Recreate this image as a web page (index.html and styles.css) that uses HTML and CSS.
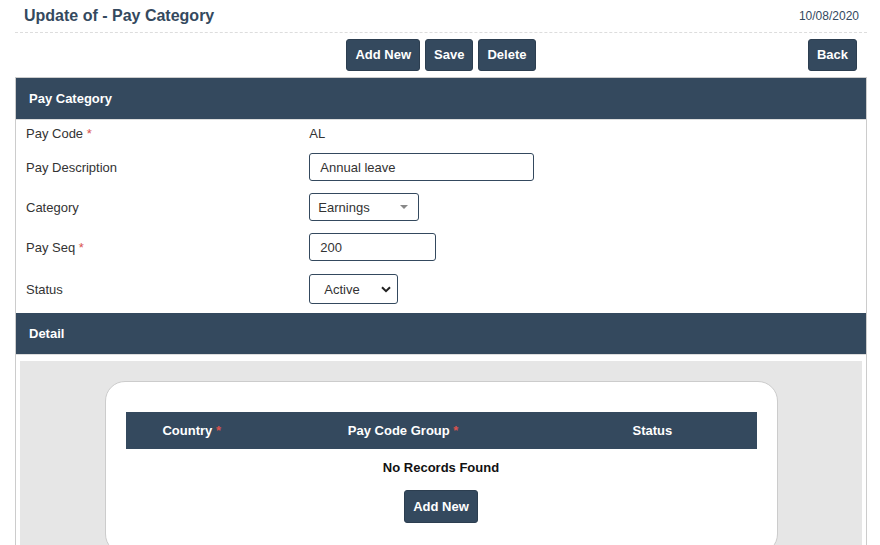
FILE: index.html
```html
<!DOCTYPE html>
<html lang="en">
<head>
	<meta charset="UTF-8">
	<title>Pay Category</title>
	<link rel="stylesheet" href="styles.css">
</head>
<body>
	<div class="page">
		<div class="page-hd">
			<h1 class="page-title">Update of - Pay Category</h1>
			<span class="page-date">10/08/2020</span>
		</div>
		<div class="toolbar">
			<div class="btn-group">
				<a href="#" class="btn">Add New</a>
				<a href="#" class="btn">Save</a>
				<a href="#" class="btn">Delete</a>
			</div>
			<a href="#" class="btn btn-back">Back</a>
		</div>
		<div class="panel">
			<div class="panel-hd">Pay Category</div>
			<div class="form-row row-text">
				<label class="form-label">Pay Code <span class="req">*</span></label>
				<div class="form-value">AL</div>
			</div>
			<div class="form-row">
				<label class="form-label">Pay Description</label>
				<div class="form-value"><input type="text" class="field field-desc" value="Annual leave"></div>
			</div>
			<div class="form-row">
				<label class="form-label">Category</label>
				<div class="form-value">
					<div class="dropdown">
						<span>Earnings</span>
						<span class="caret"></span>
					</div>
				</div>
			</div>
			<div class="form-row">
				<label class="form-label">Pay Seq <span class="req">*</span></label>
				<div class="form-value"><input type="text" class="field field-seq" value="200"></div>
			</div>
			<div class="form-row row-last">
				<label class="form-label">Status</label>
				<div class="form-value">
					<div class="select-wrap">
						<select class="field field-status">
							<option>Active</option>
							<option>Inactive</option>
						</select>
						<svg class="chevron" width="10" height="7" viewBox="0 0 10 7"><path d="M1 1.2 L5 5.2 L9 1.2" fill="none" stroke="#222" stroke-width="2"/></svg>
					</div>
				</div>
			</div>
			<div class="panel-hd">Detail</div>
			<div class="detail">
				<div class="detail-bg">
					<div class="card">
						<table class="grid">
							<thead>
								<tr>
									<th class="col-country">Country <span class="req">*</span></th>
									<th class="col-group">Pay Code Group <span class="req">*</span></th>
									<th class="col-status">Status</th>
								</tr>
							</thead>
							<tbody>
								<tr><td colspan="3" class="empty">No Records Found</td></tr>
							</tbody>
						</table>
						<div class="card-ft"><a href="#" class="btn">Add New</a></div>
					</div>
				</div>
			</div>
		</div>
	</div>
</body>
</html>
```

FILE: styles.css
```css
*{box-sizing: border-box;}
body{
	margin: 0;
	font-family: "Liberation Sans", Arial, sans-serif;
	font-size: 13px;
	color: #333;
	background: #fff;
}
a{text-decoration: none;}
.page{
	padding: 0 13px 0 15px;
}
.page-hd{
	display: flex;
	justify-content: space-between;
	align-items: center;
	height: 33px;
	padding: 0 8px 0 9px;
	border-bottom: 1px dashed #ddd;
}
.page-title{
	margin: 0;
	font-size: 16px;
	font-weight: bold;
	color: #34495e;
}
.page-date{
	font-size: 12px;
	color: #34495e;
}
.toolbar{
	display: grid;
	grid-template-columns: 1fr auto 1fr;
	align-items: center;
	padding: 6px 0;
}
.btn-group{
	grid-column: 2;
	display: flex;
	gap: 5px;
}
.btn{
	display: inline-block;
	height: 32px;
	line-height: 30px;
	padding: 0 8px;
	background: #34495e;
	border: 1px solid #2c3e50;
	border-radius: 3px;
	color: #fff;
	font-weight: bold;
	font-size: 13px;
}
.card-ft .btn{
	height: 33px;
	line-height: 31px;
}
.btn-back{
	grid-column: 3;
	justify-self: end;
	margin-right: 10px;
}
.panel{
	border: 1px solid #ccc;
	border-bottom: 0;
}
.panel-hd{
	height: 42px;
	line-height: 41px;
	padding-left: 13px;
	background: #34495e;
	border-bottom: 1px solid #ddd;
	color: #fff;
	font-weight: bold;
	font-size: 13px;
}
.form-row{
	display: grid;
	grid-template-columns: 1fr 2fr;
	align-items: center;
	padding: 6px 0;
	min-height: 40px;
}
.row-text{
	padding: 5px 0;
	min-height: 27px;
}
.row-last{
	padding: 7px 0 9px;
}
.form-label{
	padding-left: 10px;
	color: #333;
}
.form-value{
	padding-left: 10px;
	color: #333;
}
.req{color: #d9534f;}
.field{
	height: 28px;
	border: 1px solid #34495e;
	border-radius: 3px;
	padding: 0 10px;
	font-family: "Liberation Sans", Arial, sans-serif;
	font-size: 13px;
	color: #333;
	background: #fff;
	outline: none;
}
.field-desc{width: 225px;}
.field-seq{width: 127px;}
.dropdown{
	display: flex;
	align-items: center;
	justify-content: space-between;
	width: 110px;
	height: 28px;
	border: 1px solid #34495e;
	border-radius: 3px;
	padding: 0 10px 0 8px;
	background: #fff;
}
.caret{
	width: 0;
	height: 0;
	border-left: 4px solid transparent;
	border-right: 4px solid transparent;
	border-top: 4px solid #888;
}
.select-wrap{
	position: relative;
	display: inline-block;
	vertical-align: top;
}
.field-status{
	display: block;
	width: 89px;
	height: 30px;
	padding: 0 14px;
	-webkit-appearance: none;
	appearance: none;
}
.chevron{
	position: absolute;
	right: 7px;
	top: 12px;
	pointer-events: none;
}
.detail{
	padding: 6px 4px 0;
}
.detail-bg{
	background: #e6e6e6;
	padding: 20px 0 20px;
}
.card{
	width: 673px;
	margin: 0 auto;
	background: #fff;
	border: 1px solid #ccc;
	border-radius: 20px;
	padding: 30px 20px 30px;
}
.grid{
	width: 100%;
	border-collapse: collapse;
}
.grid th{
	height: 37px;
	background: #34495e;
	color: #fff;
	font-weight: bold;
	font-size: 13px;
	text-align: center;
}
.col-country{width: 21%;}
.col-group{width: 46%;}
.col-status{width: 33%;}
.grid .empty{
	height: 36px;
	text-align: center;
	font-weight: bold;
	color: #111;
	padding-top: 2px;
}
.card-ft{
	text-align: center;
	padding-top: 5px;
}
```
